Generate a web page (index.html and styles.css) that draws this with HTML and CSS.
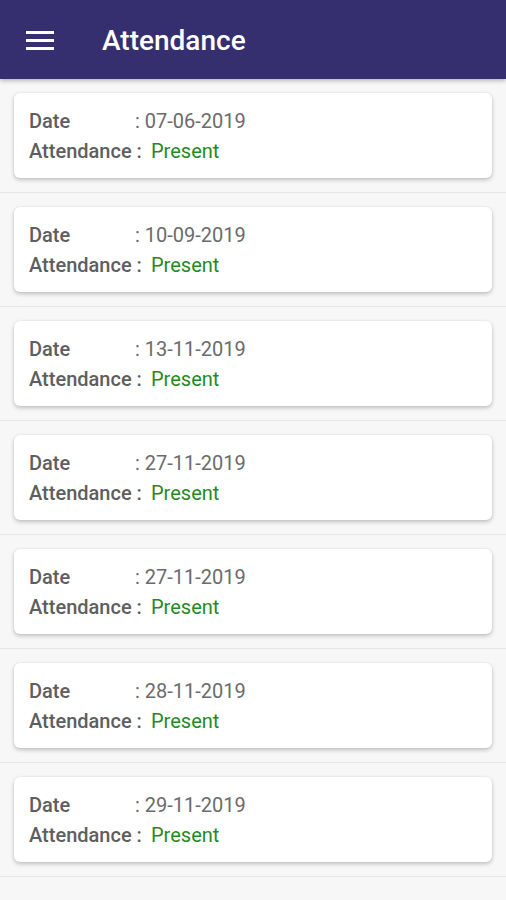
FILE: index.html
```html
<!DOCTYPE html>
<html lang="en">

<head>
    <meta charset="UTF-8">
    <meta name="viewport" content="width=device-width, initial-scale=1.0">
    <title>Attendance</title>
    <link rel="stylesheet" href="styles.css">
</head>

<body>
    <header class="toolbar">
        <svg class="menu-icon" width="28" height="20" viewBox="0 0 28 20">
            <rect x="0" y="1" width="28" height="3" fill="#fff"/>
            <rect x="0" y="9" width="28" height="3" fill="#fff"/>
            <rect x="0" y="17" width="28" height="3" fill="#fff"/>
        </svg>
        <h1>Attendance</h1>
    </header>

    <div class="list">
        <div class="row">
            <div class="card">
                <div class="line"><span class="label">Date</span><span class="value">: 07-06-2019</span></div>
                <div class="line"><span class="label">Attendance :</span><span class="status">Present</span></div>
            </div>
        </div>
        <div class="row">
            <div class="card">
                <div class="line"><span class="label">Date</span><span class="value">: 10-09-2019</span></div>
                <div class="line"><span class="label">Attendance :</span><span class="status">Present</span></div>
            </div>
        </div>
        <div class="row">
            <div class="card">
                <div class="line"><span class="label">Date</span><span class="value">: 13-11-2019</span></div>
                <div class="line"><span class="label">Attendance :</span><span class="status">Present</span></div>
            </div>
        </div>
        <div class="row">
            <div class="card">
                <div class="line"><span class="label">Date</span><span class="value">: 27-11-2019</span></div>
                <div class="line"><span class="label">Attendance :</span><span class="status">Present</span></div>
            </div>
        </div>
        <div class="row">
            <div class="card">
                <div class="line"><span class="label">Date</span><span class="value">: 27-11-2019</span></div>
                <div class="line"><span class="label">Attendance :</span><span class="status">Present</span></div>
            </div>
        </div>
        <div class="row">
            <div class="card">
                <div class="line"><span class="label">Date</span><span class="value">: 28-11-2019</span></div>
                <div class="line"><span class="label">Attendance :</span><span class="status">Present</span></div>
            </div>
        </div>
        <div class="row">
            <div class="card">
                <div class="line"><span class="label">Date</span><span class="value">: 29-11-2019</span></div>
                <div class="line"><span class="label">Attendance :</span><span class="status">Present</span></div>
            </div>
        </div>
    </div>
</body>

</html>
```

FILE: styles.css
```css
body {
    font-family: Roboto, "Liberation Sans", sans-serif;
    margin: 0;
    padding: 0;
    background-color: #f7f7f7;
    height: 900px;
    overflow: hidden;
}

.toolbar {
    display: flex;
    align-items: center;
    height: 79px;
    background-color: #352f70;
    padding-left: 26px;
    box-sizing: border-box;
    box-shadow: 0 2px 4px rgba(0, 0, 0, 0.25);
    position: relative;
}

.menu-icon {
    display: block;
    margin-top: 1px;
}

.toolbar h1 {
    margin: 2px 0 0 48px;
    color: #ffffff;
    font-size: 28px;
    font-weight: 500;
}

.row {
    padding: 14px;
    border-bottom: 1px solid #e6e6e6;
}

.card {
    background-color: #ffffff;
    border-radius: 6px;
    box-shadow: 0 2px 4px rgba(0, 0, 0, 0.22), 0 0 2px rgba(0, 0, 0, 0.08);
    padding: 13px 15px 13px 15px;
    height: 59px;
}

.line {
    display: flex;
    align-items: baseline;
    font-size: 20px;
    line-height: 30px;
}

.label {
    width: 106px;
    color: #5e5e5e;
    font-weight: 500;
}

.line:last-child .label {
    width: 122px;
}

.value {
    color: #6b6b6b;
}

.status {
    color: #1f8b24;
}
```
